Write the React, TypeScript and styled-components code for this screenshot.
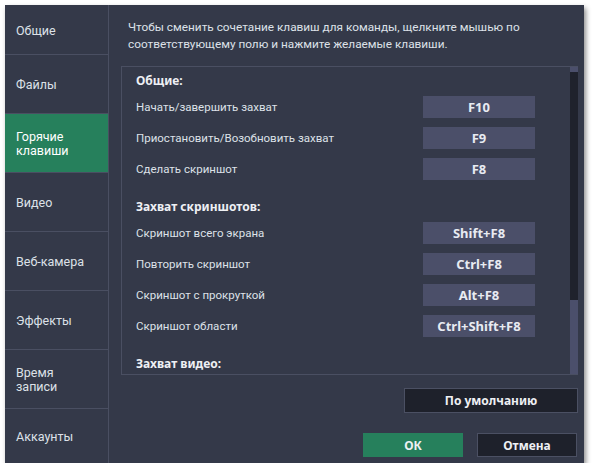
import React from "react";
import styled, { createGlobalStyle } from "styled-components";

const Global = createGlobalStyle`
  html, body { margin: 0; padding: 0; background: #ffffff; }
  body { font-family: Roboto, "Noto Sans", "Liberation Sans", sans-serif; }
  #root { padding: 5px 0 0 5px; }
`;

const Window = styled.div`
  width: 579px;
  height: 458px;
  background: #343949;
  box-shadow: 2px 3px 5px rgba(0, 0, 0, 0.45);
  display: flex;
  color: #dde1e8;
  font-size: 12px;
`;

const Sidebar = styled.nav`
  width: 103px;
  border-right: 1px solid #4a4f62;
  display: flex;
  flex-direction: column;
`;

const NavItem = styled.div<{ $active?: boolean; $first?: boolean; $last?: boolean }>`
  height: ${(p) => (p.$first ? 50 : 59)}px;
  flex-shrink: 0;
  ${(p) => (p.$last ? "flex: 1;" : "")}
  border-bottom: ${(p) => (p.$last ? "none" : "1px solid #4a4f62")};
  background: ${(p) => (p.$active ? "#26805c" : "transparent")};
  color: ${(p) => (p.$active ? "#ffffff" : "#dde1e8")};
  display: flex;
  align-items: center;
  padding: 2px 0 0 11px;
  box-sizing: border-box;
  line-height: 14px;
  font-size: 12.5px;
`;

const Main = styled.div`
  flex: 1;
  display: flex;
  flex-direction: column;
  padding: 14px 6px 6px 12px;
  box-sizing: border-box;
`;

const Hint = styled.p`
  margin: 0 0 0 7px;
  line-height: 17px;
  font-size: 11.8px;
  color: #dde1e8;
`;

const ListBox = styled.div`
  margin-top: 13px;
  height: 308px;
  border: 1px solid #4a4f62;
  border-right: none;
  display: flex;
  overflow: hidden;
`;

const List = styled.div`
  flex: 1;
  padding: 3px 35px 0 14px;
  display: flex;
  flex-direction: column;
  gap: 16px;
`;

const Section = styled.section`
  display: flex;
  flex-direction: column;
  gap: 9px;
`;

const SectionTitle = styled.div`
  height: 22px;
  line-height: 22px;
  font-family: "Noto Sans", Roboto, sans-serif;
  font-size: 12px;
  font-weight: bold;
  color: #eef0f4;
  margin-bottom: -5px;
`;

const Row = styled.div`
  display: flex;
  align-items: center;
  justify-content: space-between;
  height: 22px;
`;

const Label = styled.span`
  font-size: 11.5px;
  color: #dde1e8;
`;

const Key = styled.div`
  width: 112px;
  height: 22px;
  background: #4b4f69;
  color: #e8ebf2;
  font-family: "Noto Sans", Roboto, sans-serif;
  font-size: 13px;
  font-weight: bold;
  display: flex;
  align-items: center;
  justify-content: center;
`;

const Scrollbar = styled.div`
  width: 8px;
  margin-top: -1px;
  background: #4b4f6b;
  display: flex;
  flex-direction: column;
`;

const Thumb = styled.div`
  margin-top: 6px;
  height: 228px;
  background: #1f222c;
`;

const Footer = styled.div`
  display: flex;
  flex-direction: column;
  align-items: flex-end;
  margin-top: 13px;
  gap: 20px;
`;

const ButtonRow = styled.div`
  display: flex;
  gap: 14px;
  padding-right: 1px;
`;

const Button = styled.button<{ $primary?: boolean; $width: number; $height: number }>`
  width: ${(p) => p.$width}px;
  height: ${(p) => p.$height}px;
  box-sizing: border-box;
  background: ${(p) => (p.$primary ? "#26805c" : "#1e212b")};
  border: 1px solid ${(p) => (p.$primary ? "#26805c" : "#4b5063")};
  color: #eef0f4;
  font-family: "Noto Sans", "Liberation Sans", sans-serif;
  font-size: 12px;
  font-weight: bold;
  padding: 0;
  cursor: pointer;
`;

const navItems = [
  ["Общие"],
  ["Файлы"],
  ["Горячие", "клавиши"],
  ["Видео"],
  ["Веб-камера"],
  ["Эффекты"],
  ["Время", "записи"],
  ["Аккаунты"],
];

const sections: { title: string; rows: [string, string][] }[] = [
  {
    title: "Общие:",
    rows: [
      ["Начать/завершить захват", "F10"],
      ["Приостановить/Возобновить захват", "F9"],
      ["Сделать скриншот", "F8"],
    ],
  },
  {
    title: "Захват скриншотов:",
    rows: [
      ["Скриншот всего экрана", "Shift+F8"],
      ["Повторить скриншот", "Ctrl+F8"],
      ["Скриншот с прокруткой", "Alt+F8"],
      ["Скриншот области", "Ctrl+Shift+F8"],
    ],
  },
  {
    title: "Захват видео:",
    rows: [],
  },
];

export default function App() {
  return (
    <>
      <Global />
      <Window>
        <Sidebar>
          {navItems.map((lines, i) => (
            <NavItem
              key={lines.join(" ")}
              $first={i === 0}
              $last={i === navItems.length - 1}
              $active={i === 2}
            >
              <span>
                {lines.map((l, j) => (
                  <React.Fragment key={l}>
                    {j > 0 && <br />}
                    {l}
                  </React.Fragment>
                ))}
              </span>
            </NavItem>
          ))}
        </Sidebar>
        <Main>
          <Hint>
            Чтобы сменить сочетание клавиш для команды, щелкните мышью по
            <br />
            соответствующему полю и нажмите желаемые клавиши.
          </Hint>
          <ListBox>
            <List>
              {sections.map((s) => (
                <Section key={s.title}>
                  <SectionTitle>{s.title}</SectionTitle>
                  {s.rows.map(([label, key]) => (
                    <Row key={label}>
                      <Label>{label}</Label>
                      <Key>{key}</Key>
                    </Row>
                  ))}
                </Section>
              ))}
            </List>
            <Scrollbar>
              <Thumb />
            </Scrollbar>
          </ListBox>
          <Footer>
            <Button $width={174} $height={25}>
              По умолчанию
            </Button>
            <ButtonRow>
              <Button $primary $width={100} $height={24}>
                ОК
              </Button>
              <Button $width={100} $height={24}>
                Отмена
              </Button>
            </ButtonRow>
          </Footer>
        </Main>
      </Window>
    </>
  );
}
